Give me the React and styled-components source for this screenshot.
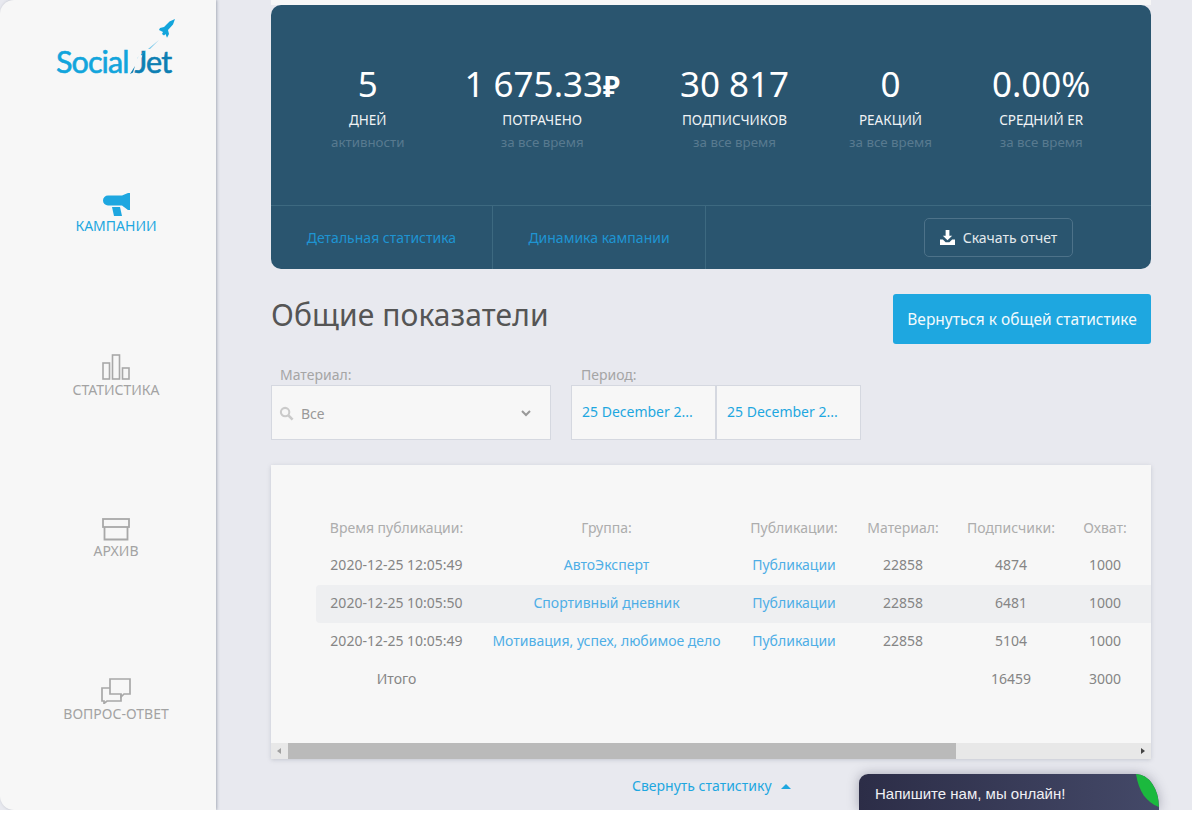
import styled, { createGlobalStyle } from "styled-components";

const GlobalStyle = createGlobalStyle`
  html, body {
    margin: 0;
    background: #fff;
    font-family: "Noto Sans", "Open Sans", sans-serif;
  }
`;

const Shell = styled.div`
  position: relative;
  width: 1192px;
  height: 810px;
  display: flex;
  overflow: hidden;
  background: #e8e9ef;
`;

const Sidebar = styled.aside`
  width: 216px;
  flex: none;
  box-sizing: border-box;
  padding-left: 16px;
  background: #f7f7f7;
  border-radius: 14px 0 0 14px;
  box-shadow: 1px 0 3px rgba(90, 100, 120, 0.45);
  display: flex;
  flex-direction: column;
  align-items: center;
`;

const LogoBox = styled.div`
  position: relative;
  width: 120px;
  height: 60px;
  margin: 19px 0 114px;
`;

const LogoText = styled.div`
  position: absolute;
  left: 0;
  top: 24px;
  display: flex;
  font-family: Lato, sans-serif;
  font-size: 30.500px;
  line-height: 36px;
  letter-spacing: -0.9px;
  -webkit-text-stroke: 0.6px currentColor;
  color: #12a5dc;
`;

const LogoJet = styled.span`
  margin-left: 6px;
  color: #0d7fb3;
`;

const RocketSvg = styled.svg`
  position: absolute;
  left: 0;
  top: 0;
`;

const NavItem = styled.a`
  height: ${({ $h }) => $h}px;
  display: flex;
  flex-direction: column;
  align-items: center;
  font-size: 14px;
  line-height: 20px;
  color: ${({ $active }) => ($active ? "#1ea7e0" : "#a3a3a3")};
  svg {
    display: block;
  }
`;

const Main = styled.main`
  flex: 1;
  min-width: 0;
  padding: 0 41px 0 55px;
`;

const TopEdge = styled.div`
  height: 5px;
  background: #f7f7f7;
`;

const StatPanel = styled.section`
  height: 264px;
  border-radius: 10px;
  background: #2a556f;
  display: flex;
  flex-direction: column;
`;

const StatRow = styled.div`
  height: 201px;
  box-sizing: border-box;
  padding: 56px 0 0 60px;
  display: flex;
  gap: 60px;
  border-bottom: 1px solid #3d6980;
`;

const Stat = styled.div`
  display: flex;
  flex-direction: column;
  align-items: center;
`;

const StatValue = styled.div`
  height: 46px;
  font-size: 35px;
  line-height: 46px;
  color: #fff;
  white-space: nowrap;
`;

const Rub = styled.span`
  font-size: 28px;
  line-height: 1;
  font-weight: 700;
`;

const StatLabel = styled.div`
  margin-top: 4px;
  font-size: 13.500px;
  line-height: 19px;
  color: #f0f3f5;
`;

const StatSub = styled.div`
  margin-top: 3px;
  font-size: 13.300px;
  line-height: 19px;
  color: #587a8f;
`;

const PanelBar = styled.div`
  flex: 1;
  display: flex;
  align-items: center;
`;

const BarTab = styled.a`
  width: ${({ $w }) => $w}px;
  height: 100%;
  flex: none;
  box-sizing: border-box;
  display: flex;
  align-items: center;
  justify-content: center;
  border-right: 1px solid #3d6980;
  font-size: 14px;
  color: #1e94d2;
`;

const DownloadBtn = styled.button`
  width: 149px;
  height: 39px;
  margin-left: 218px;
  padding: 0;
  display: flex;
  align-items: center;
  justify-content: center;
  gap: 8px;
  border: 1px solid #4d7289;
  border-radius: 5px;
  background: transparent;
  color: #e3e9ed;
  font: 14px "Noto Sans", sans-serif;
`;

const HeadRow = styled.div`
  margin-top: 25px;
  display: flex;
  justify-content: space-between;
`;

const Title = styled.h2`
  margin: 0;
  padding-top: 1px;
  font-size: 30px;
  line-height: 40px;
  letter-spacing: 0.1px;
  font-weight: 400;
  color: #555;
`;

const BackBtn = styled.button`
  width: 258px;
  height: 50px;
  padding: 0;
  border: 0;
  border-radius: 3px;
  background: #1ea7e0;
  color: #f2fafd;
  font: 15.500px "Noto Sans", sans-serif;
`;

const Filters = styled.div`
  margin-top: 20px;
  display: flex;
  gap: 20px;
`;

const Field = styled.div`
  display: flex;
  flex-direction: column;
`;

const FieldLabel = styled.label`
  padding-left: ${({ $pad }) => $pad}px;
  font-size: 14px;
  line-height: 21px;
  color: #a5a5a5;
`;

const SelectBox = styled.div`
  width: 280px;
  height: 55px;
  box-sizing: border-box;
  padding: 1px 19px 0 7px;
  display: flex;
  align-items: center;
  gap: 7px;
  background: #f7f7f7;
  border: 1px solid #d5d8e0;
  font-size: 14px;
  color: #999;
`;

const SelectValue = styled.span`
  flex: 1;
`;

const DateRow = styled.div`
  display: flex;
`;

const DateBox = styled.div`
  width: 145px;
  height: 55px;
  box-sizing: border-box;
  padding: 0 10px 2px;
  display: flex;
  align-items: center;
  background: #f7f7f7;
  border: 1px solid #d5d8e0;
  font-size: 14px;
  color: #1ea7e0;
  white-space: nowrap;
`;

const TableCard = styled.section`
  margin-top: 25px;
  height: 294px;
  background: #f7f7f7;
  box-shadow: 0 1px 4px rgba(120, 125, 140, 0.3);
  display: flex;
  flex-direction: column;
`;

const TableScroll = styled.div`
  flex: 1;
  overflow: hidden;
  padding: 43px 0 0 45px;
`;

const Table = styled.table`
  width: 926px;
  table-layout: fixed;
  border-collapse: collapse;
  font-size: 14px;
  color: #858585;
`;

const Col = styled.col`
  width: ${({ $w }) => $w}px;
`;

const Th = styled.th`
  height: 39px;
  padding: 0;
  font-weight: 400;
  color: #adadad;
  white-space: nowrap;
`;

const Tr = styled.tr`
  background: ${({ $alt }) => ($alt ? "#eeeff1" : "transparent")};
  td:first-child {
    border-radius: 4px 0 0 4px;
  }
`;

const Td = styled.td`
  height: 34px;
  padding: 0 0 4px;
  text-align: center;
  white-space: nowrap;
  color: ${({ $link }) => ($link ? "#4eaee6" : "#858585")};
`;

const Scrollbar = styled.div`
  height: 16px;
  display: flex;
  align-items: center;
  background: #e8e8e8;
`;

const Arrow = styled.span`
  width: 0;
  height: 0;
  border-style: solid;
  border-width: 3.500px 0;
  border-top-color: transparent;
  border-bottom-color: transparent;
  ${({ $dir }) =>
    $dir === "left"
      ? "border-right: 4px solid #a0a0a0; margin: 0 7px 0 6px;"
      : "border-left: 4px solid #444; margin: 0 6px 0 auto;"}
`;

const Thumb = styled.div`
  width: 668px;
  height: 100%;
  background: #bababa;
`;

const Collapse = styled.a`
  margin-top: 18px;
  padding-left: 361px;
  display: flex;
  align-items: center;
  gap: 9px;
  font-size: 14px;
  line-height: 18px;
  color: #1ea7e0;
`;

const Caret = styled.span`
  width: 0;
  height: 0;
  border-left: 5px solid transparent;
  border-right: 5px solid transparent;
  border-bottom: 5px solid #1ea7e0;
`;

const ChatWidget = styled.div`
  position: absolute;
  left: 859px;
  top: 774px;
  width: 300px;
  height: 36px;
  box-sizing: border-box;
  padding: 11px 0 0 16px;
  overflow: hidden;
  border-radius: 9px 23px 0 0 / 9px 33px 0 0;
  background: linear-gradient(90deg, #2c2d47, #444968);
  box-shadow: 0 0 12px rgba(40, 40, 70, 0.35);
  font: 15px/18px "Liberation Sans", Arial, sans-serif;
  color: #f0f0f4;
`;

const Leaf = styled.svg`
  position: absolute;
  right: 0;
  top: 0;
`;

const NAV = [
  {
    label: "КАМПАНИИ",
    active: true,
    h: 161,
    icon: (
      <svg width="27" height="23" viewBox="0 0 27 23" fill="#1ea7e0">
        <path d="M5 2.500H19L25 0h2v17h-2L19 12.500H5a5 5 0 0 1 0-10z" />
        <path d="M9 14h8l2 9h-8z" />
      </svg>
    ),
  },
  {
    label: "СТАТИСТИКА",
    h: 164,
    icon: (
      <svg width="28" height="26" viewBox="0 0 28 26" fill="none" stroke="#a8a8a8" strokeWidth="1.600">
        <rect x="1" y="9" width="6.500" height="16" />
        <rect x="10.500" y="1" width="7" height="24" />
        <rect x="20.500" y="14" width="6.500" height="11" />
      </svg>
    ),
  },
  {
    label: "АРХИВ",
    h: 160,
    icon: (
      <svg width="28" height="23" viewBox="0 0 28 23" fill="none" stroke="#a8a8a8" strokeWidth="1.800">
        <rect x="1" y="1" width="26" height="8" />
        <path d="M2.500 9v12.500h23V9" />
      </svg>
    ),
  },
  {
    label: "ВОПРОС-ОТВЕТ",
    h: 100,
    icon: (
      <svg width="30" height="26" viewBox="0 0 30 26" fill="none" stroke="#a8a8a8" strokeWidth="1.700">
        <path d="M9 12V1h20v15h-6l-3 3v-3H9z" />
        <path d="M9 10H1v13h2v2.500L6 23h14v-7" />
      </svg>
    ),
  },
];

const STATS = [
  { value: "5", label: "ДНЕЙ", sub: "активности" },
  { value: "1 675.33", rub: true, label: "ПОТРАЧЕНО", sub: "за все время" },
  { value: "30 817", label: "ПОДПИСЧИКОВ", sub: "за все время" },
  { value: "0", label: "РЕАКЦИЙ", sub: "за все время" },
  { value: "0.00%", label: "СРЕДНИЙ ER", sub: "за все время" },
];

const COLS = [161, 259, 116, 102, 114, 74, 100];
const HEADERS = ["Время публикации:", "Группа:", "Публикации:", "Материал:", "Подписчики:", "Охват:", ""];

const ROWS = [
  ["2020-12-25 12:05:49", "АвтоЭксперт", "4874"],
  ["2020-12-25 10:05:50", "Спортивный дневник", "6481"],
  ["2020-12-25 10:05:49", "Мотивация, успех, любимое дело", "5104"],
];

export default function App() {
  return (
    <>
      <GlobalStyle />
      <Shell>
        <Sidebar>
          <LogoBox>
            <LogoText>
              Social<LogoJet>Jet</LogoJet>
            </LogoText>
            <RocketSvg width="124" height="64" viewBox="0 0 124 64">
              <path d="M119 0l-5.500 2.500L108 8l-4 1-1 2 4 2-1 2 2 1.500 1.500-1.500 1.500 3.700 2-3.700-1-4 5-5.500z" fill="#12a5dc" />
              <path d="M103 21L92 30l2 0z" fill="#7cc9ea" />
              <path d="M90 31L81 39.500l3-1z" fill="#12a5dc" />
              <path d="M85 36L72 60" stroke="#f7f7f7" strokeWidth="3" />
              <path d="M79 47L74 55l3-1.500z" fill="#0d7fb3" />
            </RocketSvg>
          </LogoBox>
          {NAV.map((item) => (
            <NavItem key={item.label} $active={item.active} $h={item.h}>
              {item.icon}
              {item.label}
            </NavItem>
          ))}
        </Sidebar>
        <Main>
          <TopEdge />
          <StatPanel>
            <StatRow>
              {STATS.map((s) => (
                <Stat key={s.label}>
                  <StatValue>
                    {s.value}
                    {s.rub && <Rub>₽</Rub>}
                  </StatValue>
                  <StatLabel>{s.label}</StatLabel>
                  <StatSub>{s.sub}</StatSub>
                </Stat>
              ))}
            </StatRow>
            <PanelBar>
              <BarTab $w={222}>Детальная статистика</BarTab>
              <BarTab $w={213}>Динамика кампании</BarTab>
              <DownloadBtn>
                <svg width="15" height="15" viewBox="0 0 16 16" fill="#fff">
                  <path d="M6 0h4v6h3l-5 5-5-5h3z" />
                  <path d="M0 10h3l3 3h4l3-3h3v6H0z" />
                </svg>
                Скачать отчет
              </DownloadBtn>
            </PanelBar>
          </StatPanel>
          <HeadRow>
            <Title>Общие показатели</Title>
            <BackBtn>Вернуться к общей статистике</BackBtn>
          </HeadRow>
          <Filters>
            <Field>
              <FieldLabel $pad={9}>Материал:</FieldLabel>
              <SelectBox>
                <svg width="15" height="15" viewBox="0 0 16 16" fill="none" stroke="#cacaca" strokeWidth="2.200">
                  <circle cx="6.500" cy="6.500" r="4.500" />
                  <path d="M10 10l4.500 4.500" strokeWidth="2.800" />
                </svg>
                <SelectValue>Все</SelectValue>
                <svg width="10" height="7" viewBox="0 0 10 7" fill="none" stroke="#999" strokeWidth="2">
                  <path d="M1 1l4 4 4-4" />
                </svg>
              </SelectBox>
            </Field>
            <Field>
              <FieldLabel $pad={10}>Период:</FieldLabel>
              <DateRow>
                <DateBox>25 December 2...</DateBox>
                <DateBox>25 December 2...</DateBox>
              </DateRow>
            </Field>
          </Filters>
          <TableCard>
            <TableScroll>
              <Table>
                <colgroup>
                  {COLS.map((w, i) => (
                    <Col key={i} $w={w} />
                  ))}
                </colgroup>
                <thead>
                  <tr>
                    {HEADERS.map((h, i) => (
                      <Th key={i}>{h}</Th>
                    ))}
                  </tr>
                </thead>
                <tbody>
                  {ROWS.map((r, i) => (
                    <Tr key={r[0]} $alt={i === 1}>
                      <Td>{r[0]}</Td>
                      <Td $link>{r[1]}</Td>
                      <Td $link>Публикации</Td>
                      <Td>22858</Td>
                      <Td>{r[2]}</Td>
                      <Td>1000</Td>
                      <Td />
                    </Tr>
                  ))}
                  <Tr>
                    <Td>Итого</Td>
                    <Td />
                    <Td />
                    <Td />
                    <Td>16459</Td>
                    <Td>3000</Td>
                    <Td />
                  </Tr>
                </tbody>
              </Table>
            </TableScroll>
            <Scrollbar>
              <Arrow $dir="left" />
              <Thumb />
              <Arrow $dir="right" />
            </Scrollbar>
          </TableCard>
          <Collapse>
            Свернуть статистику
            <Caret />
          </Collapse>
        </Main>
        <ChatWidget>
          Напишите нам, мы онлайн!
          <Leaf width="24" height="36" viewBox="0 0 24 36">
            <path d="M1 0H8C17 5 24 17 24 33C11 28 4 18 1 0z" fill="#1bb93e" />
          </Leaf>
        </ChatWidget>
      </Shell>
    </>
  );
}
